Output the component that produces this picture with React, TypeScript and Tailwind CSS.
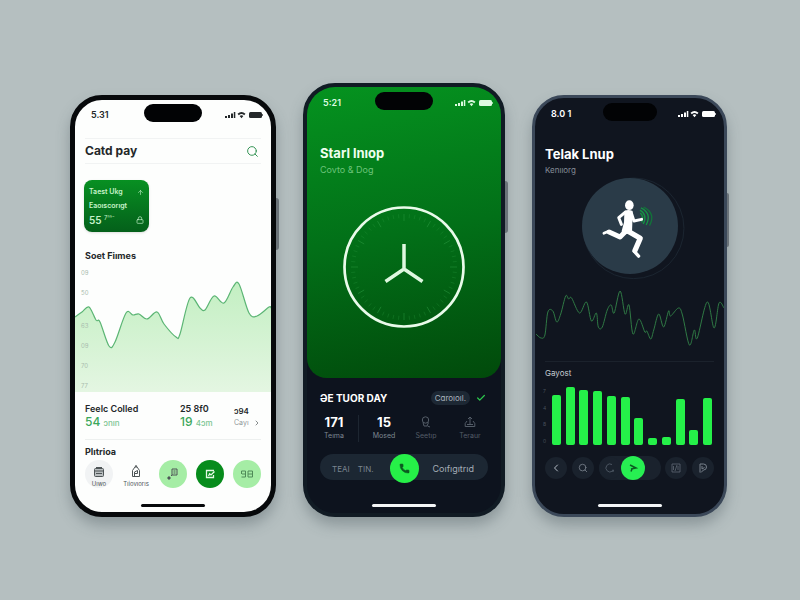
import React from 'react';
import { ArrowUp, Check, ChevronLeft, ChevronRight, Lock, Phone as PhoneIcon, Search } from 'lucide-react';

type Point = [number, number];

const fitnessPoints: Point[] = [
  [0, 51], [7, 46], [14, 41], [21, 54], [25, 56], [34, 80], [40, 76], [51, 47], [58, 49], [64, 48],
  [72, 53], [82, 46], [89, 58], [101, 71], [105, 68], [115, 32], [125, 42], [130, 44], [139, 30],
  [149, 37], [158, 21], [164, 18], [174, 47], [182, 50], [194, 41], [196, 42],
];

const pulsePoints: Point[] = [
  [1, 46], [6, 50], [10, 47], [13, 24], [18, 23], [22, 34], [26, 26], [31, 8], [34, 11], [37, 10],
  [45, 25], [52, 14], [57, 33], [62, 25], [64, 39], [68, 39], [73, 22], [77, 17], [80, 25], [86, 3],
  [91, 26], [95, 17], [99, 46], [105, 31], [111, 44], [113, 43], [117, 51], [120, 42], [125, 26],
  [130, 39], [135, 23], [137, 28], [145, 20], [149, 27], [156, 57], [161, 42], [164, 50], [174, 14],
  [181, 40], [186, 15], [191, 20],
];

const bars = [50, 58, 55, 54, 49, 48, 27, 7, 8, 46, 15, 47];

const smoothPath = (points: Point[]) =>
  points.reduce((path, [x, y], i) => {
    if (i === 0) return `M${x} ${y}`;
    const [px, py] = points[i - 1];
    const [bx, by] = points[Math.max(i - 2, 0)];
    const [nx, ny] = points[Math.min(i + 1, points.length - 1)];
    return `${path} C${px + (x - bx) / 6} ${py + (y - by) / 6} ${x - (nx - px) / 6} ${y - (ny - py) / 6} ${x} ${y}`;
  }, '');

interface StatusBarProps {
  time: string;
  className?: string;
  islandClass?: string;
}

const StatusBar: React.FC<StatusBarProps> = ({ time, className = '', islandClass = 'w-[58px]' }) => (
  <div className={`grid grid-cols-[1fr_auto_1fr] items-center ${className}`}>
    <span className="pt-1 pl-4 text-[9px] leading-3 font-semibold">{time}</span>
    <div className={`h-[18px] rounded-full bg-[#020305] ${islandClass}`} />
    <svg viewBox="0 0 38 8" className="mt-1 mr-2 h-2 w-[38px] justify-self-end fill-current">
      <path d="M0 5h2v2H0zM3 4h2v3H3zM6 2.500h2v4.500H6zM8.800 1h1.500v6H8.800z" />
      <path d="M12.500 2.800Q16.500-.6 20.500 2.800L19.200 4.200Q16.500 2 13.800 4.200zM14.600 5Q16.500 3.500 18.400 5L16.500 7.200z" />
      <rect x="24" y="1" width="13" height="6" rx="1.500" />
      <rect x="37.300" y="3" width=".7" height="2" />
    </svg>
  </div>
);

const HomeBar: React.FC<{ className: string }> = ({ className }) => (
  <div className={`mx-auto h-[3px] w-16 rounded-full ${className}`} />
);

const PayPhone: React.FC = () => (
  <section className="relative rounded-[32px] border-[5px] border-[#07090b] bg-[#fdfefd] text-[#24282a] shadow-[0_8px_14px_rgba(60,75,80,0.35)]">
    <div className="absolute top-[98px] -right-2 h-[52px] w-[3px] rounded-r bg-[#6b7379]" />
    <StatusBar time="5.31" className="pt-1" />

    <header className="mx-[10px] mt-4 flex h-[26px] items-center justify-between border-y border-[#f1f3f3]">
      <h1 className="text-xs leading-4 font-bold">Catd pay</h1>
      <button aria-label="Search" className="mr-0.5 text-[#2f9150]">
        <Search size={13} strokeWidth={1.8} />
      </button>
    </header>

    <button className="mt-4 ml-[9px] flex h-[52px] w-[65px] flex-col justify-between rounded-lg bg-linear-to-b from-[#089022] to-[#04601a] px-[5px] py-[6px] text-left text-[7px] leading-3 font-semibold text-[#c6f3cb] shadow-sm">
      <span className="flex w-full items-center justify-between">
        Taest Ukg
        <ArrowUp size={7} />
      </span>
      <span>Eaoıscorıgt</span>
      <span className="flex w-full items-center justify-between text-[10px]">
        <span>
          55 <span className="align-top text-[6px] leading-2 font-normal">7ʳⁿ⁻</span>
        </span>
        <Lock size={8} />
      </span>
    </button>

    <h2 className="mt-[18px] ml-[10px] text-[9px] leading-3 font-bold">Soet Fiımes</h2>
    <div className="relative mt-1">
      <svg viewBox="0 0 196 126" preserveAspectRatio="none" className="h-[126px] w-full">
        <defs>
          <linearGradient id="fitness" x1="0" y1="0" x2="0" y2="1">
            <stop offset="0" stopColor="#c3efc2" />
            <stop offset="1" stopColor="#e4f6e2" />
          </linearGradient>
        </defs>
        <path d={`${smoothPath(fitnessPoints)} V126 H0 Z`} fill="url(#fitness)" />
        <path d={smoothPath(fitnessPoints)} fill="none" stroke="#5bb574" strokeWidth="1.200" />
      </svg>
      <div className="absolute inset-y-0 left-[6px] flex flex-col justify-between pt-[3px] pb-[2px] text-[6px] leading-2 text-[#a9bcae]">
        <div className="flex flex-col gap-3">
          <span>09</span>
          <span>50</span>
        </div>
        <div className="flex flex-col gap-3">
          <span>63</span>
          <span>09</span>
          <span>70</span>
          <span>77</span>
        </div>
      </div>
    </div>

    <div className="mx-[10px] mt-[11px] grid grid-cols-[95fr_54fr_27fr] pb-[9px] text-[9px] leading-3 font-semibold">
      <div>
        <p>Feelc Colled</p>
        <p className="text-[12px] leading-[14px] font-medium text-[#3ba75a]">
          54 <span className="text-[8px] text-[#7cc592]">ɔnın</span>
        </p>
      </div>
      <div>
        <p>25 8f0</p>
        <p className="text-[12px] leading-[14px] font-medium text-[#3ba75a]">
          19 <span className="text-[8px] text-[#7cc592]">4ɔm</span>
        </p>
      </div>
      <div className="pt-0.5">
        <p className="text-[8px]">ɔ94</p>
        <a href="#" className="flex items-center justify-between text-[7px] leading-3 font-normal text-[#8f9799]">
          Cayı
          <ChevronRight size={8} className="text-[#4c5355]" />
        </a>
      </div>
    </div>

    <div className="mx-[10px] border-t border-[#edf0ef] pt-[6px]">
      <h2 className="text-[9px] leading-3 font-bold">Plıtrioa</h2>
      <div className="mt-0.5 flex justify-between text-[#4e5557]">
        <button className="flex h-7 w-7 flex-col items-center justify-end gap-0.5 rounded-full bg-[#f1f3f4] text-[6px] leading-2">
          <svg viewBox="0 0 12 12" className="size-3" fill="none" stroke="currentColor">
            <rect x="1.500" y="2.500" width="9" height="8" rx="1" fill="#b9bec0" />
            <path d="M1.500 5h9M3 7.500h6M3 1.500h6" />
          </svg>
          Uıwo
        </button>
        <button className="flex h-7 w-7 flex-col items-center justify-end gap-0.5 text-[6px] leading-2">
          <svg viewBox="0 0 12 14" className="h-[14px] w-3" fill="none" stroke="currentColor">
            <path d="M2.500 6.500 6 1.500l3.500 5v6h-7zM4.500 12V8l3-1.500v3H5M6 1.500V4" />
          </svg>
          Tıiovıorıs
        </button>
        <button aria-label="Transfer" className="flex size-7 items-center justify-center rounded-full bg-[#a5eda5]">
          <svg viewBox="0 0 14 14" className="size-[14px]" fill="none" stroke="currentColor">
            <path d="M6 2h5v6H6zM7.500 4h2M7.500 6h2M6 8l-1 1" />
            <circle cx="3" cy="11" r="1.200" fill="currentColor" />
          </svg>
        </button>
        <button aria-label="Exchange" className="flex size-7 items-center justify-center rounded-full bg-[#078c1c] text-[#e4f9e5]">
          <svg viewBox="0 0 12 12" className="size-3" fill="none" stroke="currentColor" strokeWidth="1.300">
            <path d="M10 2.500H2.500v7h7V7M5 5.500l2 1.500 3.500-3.500M4.500 8 6 5" />
          </svg>
        </button>
        <button aria-label="Cards" className="flex size-7 items-center justify-center rounded-full bg-[#a5eda5] text-[#4f8a58]">
          <svg viewBox="0 0 14 12" className="h-3 w-[14px]" fill="none" stroke="currentColor">
            <path d="M1.500 6V3h4v6h-4M2 6h3.500M8 3h4.500v6H8zM8 6h4.500" />
          </svg>
        </button>
      </div>
    </div>
    <HomeBar className="mt-4 mb-[5px] bg-[#07090b]" />
  </section>
);

const TimerPhone: React.FC = () => (
  <section className="relative rounded-[32px] border-4 border-[#111b24] bg-[#0d131e] text-white shadow-[0_8px_14px_rgba(60,75,80,0.35)]">
    <div className="absolute top-[94px] -right-[7px] h-[52px] w-[3px] rounded-r bg-[#6b7379]" />
    <div className="rounded-t-[28px] rounded-b-[20px] bg-linear-170 from-[#05931f] via-[#027018] to-[#014a0b] pb-[50px]">
      <StatusBar time="5:21" className="pt-[5px] text-[#dcfbe0]" />
      <h1 className="mt-[35px] ml-[13px] text-[13px] leading-4 font-bold text-[#effff0]">Starl lnıop</h1>
      <p className="mt-[3px] ml-[13px] text-[9px] leading-3 text-[#6cc47a]">Covto &amp; Dog</p>
      <svg viewBox="0 0 122 122" className="mx-auto mt-[30px] size-[122px]" fill="none">
        {Array.from({ length: 60 }, (_, i) => (
          <path
            key={i}
            d={i % 5 === 0 ? 'M61 8v7' : 'M61 8v4'}
            stroke="#2b9a41"
            strokeOpacity={i % 5 === 0 ? 0.6 : 0.35}
            strokeWidth="0.800"
            transform={`rotate(${i * 6} 61 61)`}
          />
        ))}
        <circle cx="61" cy="61" r="59.500" stroke="#e9fbea" strokeWidth="2.700" />
        <path d="M61 38v25M61 63 42.500 75.500M61 63l18.500 12.500" stroke="#dff8e0" strokeWidth="3.500" />
      </svg>
    </div>

    <div className="px-[13px] pt-[13px]">
      <div className="flex h-[14px] items-center">
        <h2 className="flex-1 text-[10px] font-bold whitespace-nowrap">ƏE TUOR DAY</h2>
        <button className="h-[14px] rounded-full bg-[#1d2834] px-1 text-[8px] leading-3 text-[#aab3bc]">Cɑroıoıl.</button>
        <Check size={10} strokeWidth={3} className="mr-0.5 ml-[6px] text-[#2cc94d]" />
      </div>

      <div className="mt-[10px] grid grid-cols-[28fr_20fr_32fr_52fr_36fr] justify-items-center text-[7px] leading-3 text-[#7d8792]">
        <div className="text-center">
          <p className="text-[13px] leading-[14px] font-bold text-white">171</p>
          <p className="mt-px">Teıma</p>
        </div>
        <div className="w-px bg-[#1d2631]" />
        <div className="text-center">
          <p className="text-[13px] leading-[14px] font-bold text-white">15</p>
          <p className="mt-px">Mosed</p>
        </div>
        <div className="flex flex-col items-center text-[#545d68]">
          <svg viewBox="0 0 12 14" className="h-[14px] w-3" fill="none" stroke="currentColor">
            <circle cx="5.500" cy="5" r="3.200" />
            <path d="M3 7.500 4 11h3l1.500-3.500M7.500 11l2.500 1" />
          </svg>
          <p className="mt-px">Seetıp</p>
        </div>
        <div className="flex flex-col items-center text-[#545d68]">
          <svg viewBox="0 0 12 14" className="h-[14px] w-3" fill="none" stroke="currentColor">
            <path d="M3 6 1.200 8.500v3h9.600v-3L9 6M6 9V2M4 4l2-2 2 2M3 9.500h6" />
          </svg>
          <p className="mt-px">Teraur</p>
        </div>
      </div>

      <nav className="mt-3 grid h-[26px] grid-cols-[1fr_auto_1fr] items-center rounded-full bg-[#1c2733] text-[9px] text-[#7a8590]">
        <div className="flex items-center justify-between pr-4 pl-3 text-[8px]">
          <button>TEAI</button>
          <button>TIN.</button>
        </div>
        <button aria-label="Call" className="flex size-[29px] items-center justify-center rounded-full bg-[#26f048] text-[#0c5a20]">
          <PhoneIcon size={11} fill="currentColor" strokeWidth={1} />
        </button>
        <button className="text-[#a4adb6]">Coıfıgıtrıd</button>
      </nav>
    </div>
    <HomeBar className="mt-6 mb-[6px] bg-[#f4f6f7]" />
  </section>
);

const RunnerBadge: React.FC = () => (
  <svg viewBox="28 24 290 290" className="mx-auto mt-0.5 size-24 overflow-visible" fill="none">
    <circle cx="184" cy="176" r="152" stroke="#1b2530" strokeWidth="3" />
    <circle cx="173" cy="169" r="145" fill="#2a3b48" />
    <g stroke="#159344" strokeWidth="4">
      <path d="M204 130q12 10 4 28" />
      <path d="M203 121q24 14 10 42" />
      <path d="M206 114q34 16 16 52" />
      <path d="M214 112q38 18 18 56" stroke="#127339" />
    </g>
    <ellipse cx="171" cy="106" rx="13" ry="15" fill="#fff" />
    <path d="M156 124q12-6 25 0l-1 38-1 27-30 8-1-14 7-25z" fill="#fff" />
    <g stroke="#fff" strokeLinecap="round" strokeLinejoin="round">
      <path d="M159 127 139 144 147 164" strokeWidth="9" />
      <path d="M177 130 185 154 208 149" strokeWidth="9" />
      <path d="M157 188 143 202 110 187" strokeWidth="15" />
      <path d="M108 185 94 191" strokeWidth="8" />
      <path d="M166 184 204 206 188 243" strokeWidth="16" />
      <path d="M186 246 199 260" strokeWidth="10" />
    </g>
  </svg>
);

const navIcon = 'flex size-[22px] items-center justify-center rounded-full bg-[#1a222d]';

const TrackPhone: React.FC = () => (
  <section className="relative rounded-[32px] border-[3px] border-[#3b4859] bg-[#10151f] text-white shadow-[0_8px_14px_rgba(60,75,80,0.35)]">
    <div className="absolute top-[95px] -right-[5px] h-[54px] w-0.5 rounded-r bg-[#6b7379]" />
    <StatusBar time="8.0 1" className="pt-[5px]" islandClass="w-[54px]" />
    <h1 className="mt-[25px] ml-[10px] text-[13px] leading-4 font-bold">Telak Lnup</h1>
    <p className="mt-0.5 ml-[10px] text-[8px] leading-3 text-[#858d97]">Kenııorg</p>
    <RunnerBadge />

    <svg viewBox="0 0 191 60" preserveAspectRatio="none" className="mt-[14px] h-[60px] w-full">
      <path d={smoothPath(pulsePoints)} fill="none" stroke="#2f7a45" strokeWidth="1" />
    </svg>

    <div className="mx-[10px] mt-[13px] border-t border-[#1b222c] pt-[5px]">
      <h2 className="text-[8px] leading-3 text-[#c5cbd1]">Gayost</h2>
    </div>
    <div className="mt-2 flex h-[58px] items-end justify-between pr-3 pl-2">
      <div className="flex h-full w-1 flex-col justify-between text-[5px] leading-2 text-[#48515c]">
        <span>7</span>
        <span>4</span>
        <span>8</span>
        <span>0</span>
      </div>
      {bars.map((value, i) => (
        <div key={i} className="w-[9px] rounded-xs bg-[#25f049]" style={{ height: `${(value / 58) * 100}%` }} />
      ))}
    </div>

    <nav className="mx-[10px] mt-[11px] flex h-6 items-center justify-between">
      <button aria-label="Back" className={`${navIcon} text-[#b4bcc5]`}>
        <ChevronLeft size={12} />
      </button>
      <button aria-label="Search" className={`${navIcon} text-[#78818c]`}>
        <Search size={10} />
      </button>
      <div className="flex items-center rounded-full bg-[#1a222d] pr-4">
        <button aria-label="History" className={`${navIcon} text-[#4b5561]`}>
          <svg viewBox="0 0 12 12" className="size-3" fill="none" stroke="currentColor">
            <path d="M8 2.500A4 4 0 1 0 8.500 9M8 9l2-.5M9 7.500v2.500" />
          </svg>
        </button>
        <button aria-label="Start" className="flex size-6 items-center justify-center rounded-full bg-[#27ef52] text-[#0c5a22]">
          <svg viewBox="0 0 12 12" className="size-3" fill="none" stroke="currentColor" strokeWidth="1.500">
            <path d="M3 3 9 6 4 7M5 7 4 9.500" />
          </svg>
        </button>
      </div>
      <button aria-label="Stats" className={`${navIcon} text-[#5f6873]`}>
        <svg viewBox="0 0 12 12" className="size-3" fill="none" stroke="currentColor" strokeWidth=".8">
          <path d="M2 2h8v8H2zM5 9l2-6M8 4v4M3.500 4v4" />
        </svg>
      </button>
      <button aria-label="Profile" className={`${navIcon} text-[#78818c]`}>
        <svg viewBox="0 0 12 12" className="size-3" fill="none" stroke="currentColor">
          <path d="M3 10.500V2h3.500a2.800 2.800 0 0 1 0 6L4 10.500M5 4v3l2.500-1.500" />
        </svg>
      </button>
    </nav>
    <HomeBar className="mt-6 mb-[7px] bg-[#f4f6f7]" />
  </section>
);

const App: React.FC = () => {
  return (
    <main className="grid min-h-screen grid-cols-[206fr_202fr_195fr] content-end items-end gap-[27px] bg-[#b5bfc0] pr-[73px] pb-[83px] pl-[70px] font-[Inter,'Liberation_Sans',sans-serif]">
      <PayPhone />
      <TimerPhone />
      <TrackPhone />
    </main>
  );
};

export default App;
